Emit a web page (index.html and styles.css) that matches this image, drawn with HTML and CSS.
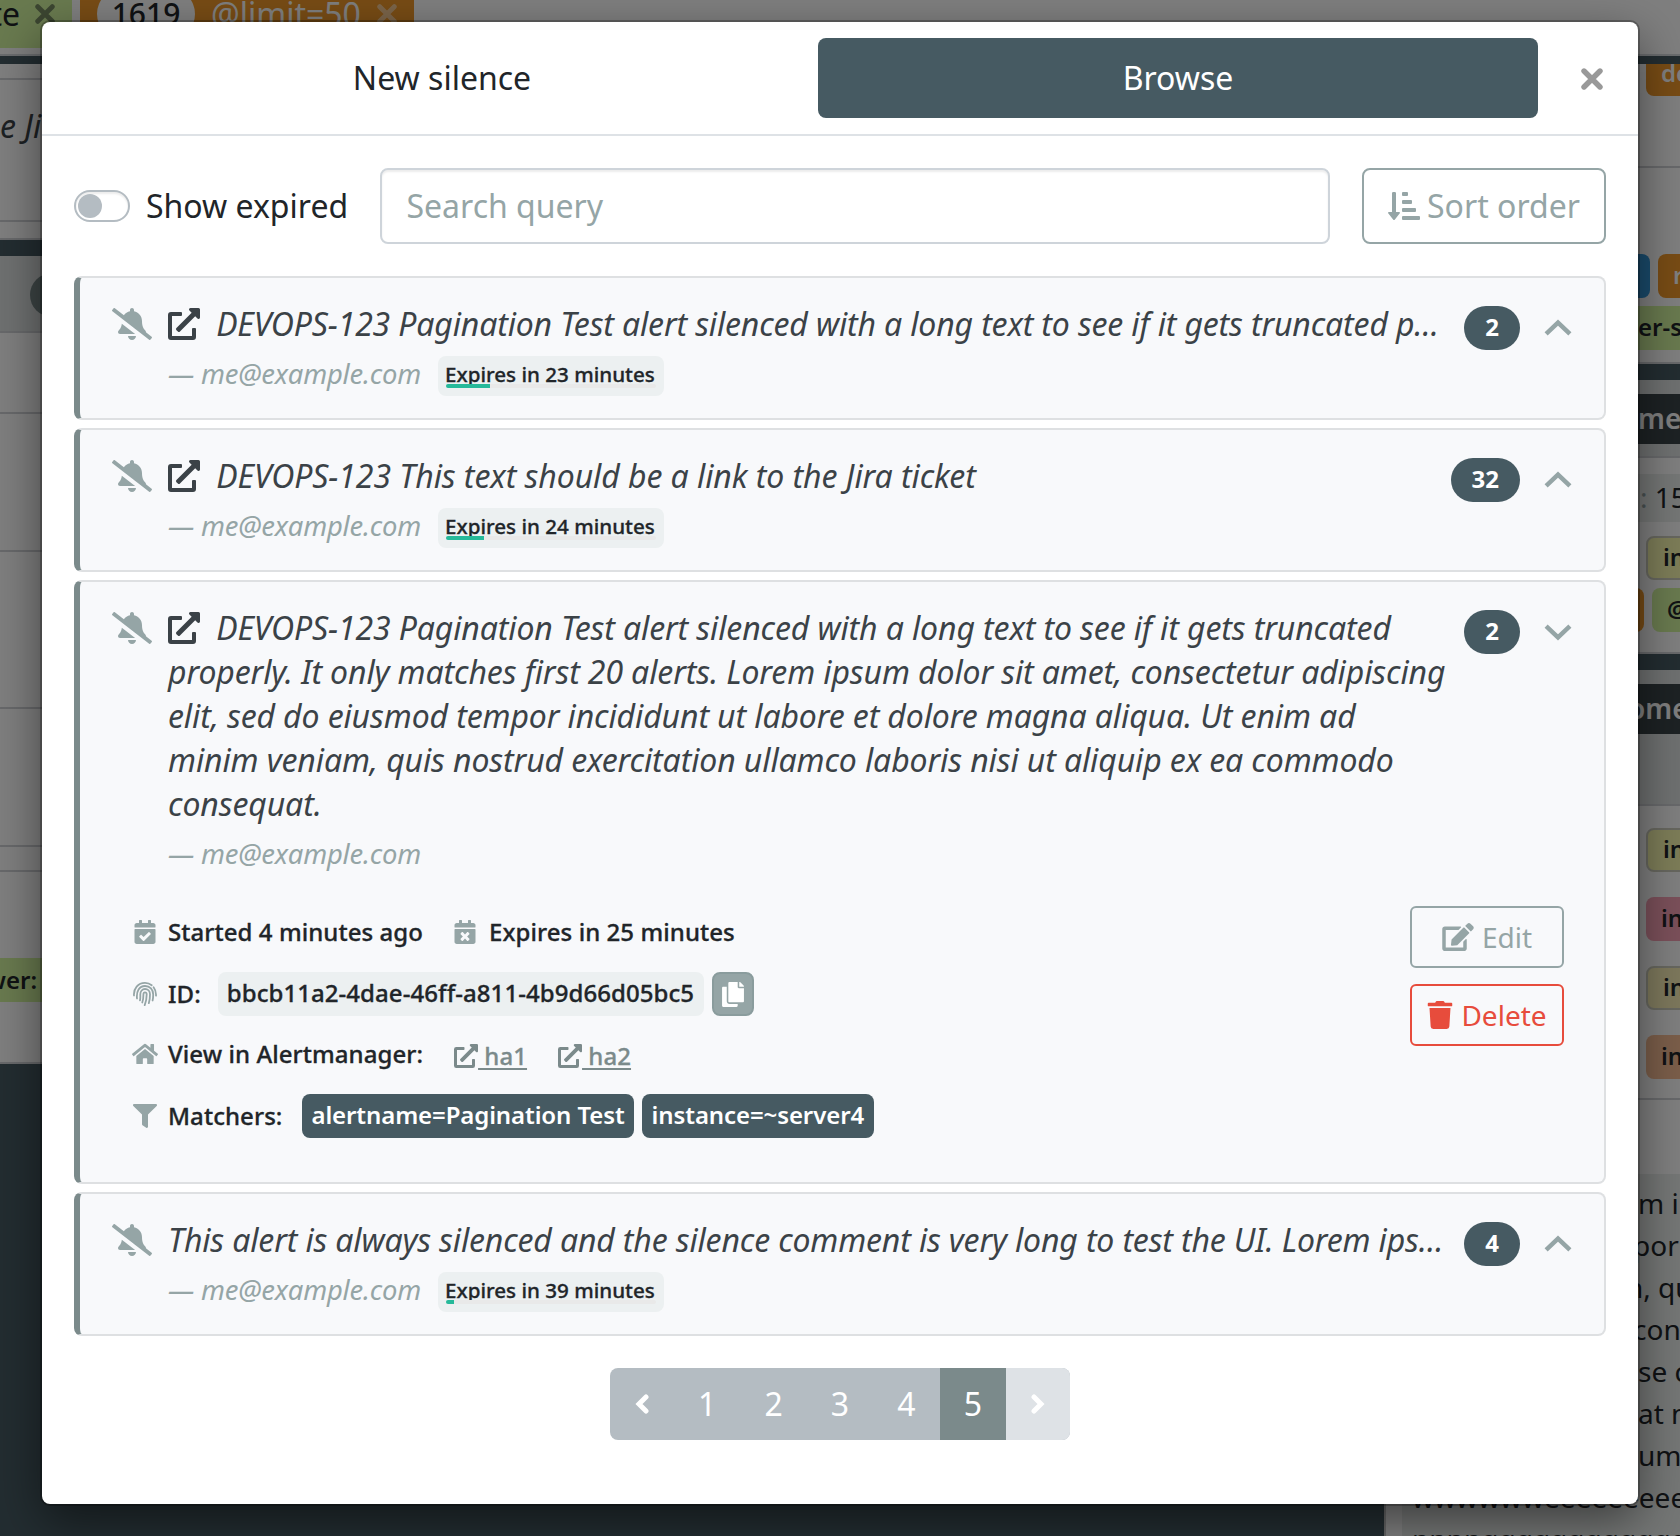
FILE: index.html
```html
<!DOCTYPE html>
<html lang="en">
<head>
<meta charset="utf-8">
<title>Silences</title>
<link rel="stylesheet" href="styles.css">
</head>
<body>
<svg class="sprite" aria-hidden="true">
  <symbol id="ext" viewBox="0 0 512 512"><path d="M432,320H400a16,16,0,0,0-16,16V448H64V128H208a16,16,0,0,0,16-16V80a16,16,0,0,0-16-16H48A48,48,0,0,0,0,112V464a48,48,0,0,0,48,48H400a48,48,0,0,0,48-48V336A16,16,0,0,0,432,320ZM488,0h-128c-21.37,0-32.05,25.91-17,41l35.73,35.73L135,320.37a24,24,0,0,0,0,34L157.67,377a24,24,0,0,0,34,0L435.28,133.32,471,169c15,15,41,4.5,41-17V24A24,24,0,0,0,488,0Z"/></symbol>
  <symbol id="bell" viewBox="0 0 640 512"><path d="M633.82 458.1l-90.62-70.05c.19-1.38.8-2.66.8-4.06.05-7.55-2.61-15.27-8.61-21.71-19.32-20.76-55.47-51.99-55.47-154.29 0-77.7-54.48-139.9-127.94-155.16V32c0-17.67-14.32-32-31.98-32s-31.98 14.33-31.98 32v20.84c-40.33 8.38-74.66 31.07-97.59 62.57L45.47 3.37C38.49-2.05 28.43-.8 23.01 6.18L3.37 31.45C-2.05 38.42-.8 48.47 6.18 53.9l588.35 454.73c6.98 5.43 17.03 4.17 22.46-2.81l19.64-25.27c5.42-6.97 4.17-17.02-2.81-22.45zM157.23 251.54c-8.61 67.96-36.41 93.33-52.62 110.75-6 6.45-8.66 14.16-8.61 21.71.11 16.4 12.98 32 32.1 32h241.92L157.23 251.54zM320 512c35.32 0 63.97-28.65 63.97-64H256.03c0 35.35 28.65 64 63.97 64z"/></symbol>
  <symbol id="chev" viewBox="0 0 28 17"><path d="M2.6 14.2 14 3.4 25.4 14.2" fill="none" stroke="currentColor" stroke-width="5" stroke-linecap="square" stroke-linejoin="miter" transform="translate(1.4 .6) scale(.9)"/></symbol>
  <symbol id="cross" viewBox="0 0 22 22"><path d="M3 3 19 19M19 3 3 19" fill="none" stroke="currentColor" stroke-width="5.4" stroke-linecap="round"/></symbol>
</svg>

<div class="page">
  <nav class="navbar">
    <span class="tag green nav-left">te <svg class="x"><use href="#cross"/></svg></span>
    <span class="tag orange nav-limit"><b class="pill">1619</b><span>@limit=50</span><svg class="x"><use href="#cross"/></svg></span>
  </nav>
  <div class="columns">
    <div class="col-left">
      <div class="gap gap-sm"></div>
      <div class="row h16"></div>
      <div class="row h142 comment">e Ji</div>
      <div class="row h18"></div>
      <div class="gap"></div>
      <div class="row h76 head"><i class="dot"></i></div>
      <div class="row h82"></div>
      <div class="row h138"></div>
      <div class="row h157"></div>
      <div class="row h138"></div>
      <div class="row h25"></div>
      <div class="row h192"><span class="tag green server">wer:</span></div>
    </div>
    <div class="col-right">
      <div class="gap gap-sm"></div>
      <div class="line h104"><span class="tag orange first">de</span></div>
      <div class="line h196 labels">
        <div class="tags"><span class="tag blue stub"></span><span class="tag orange">re</span></div>
        <div class="tags flush"><span class="tag green">er-s</span></div>
      </div>
      <div class="gap"></div>
      <div class="line head h78"><span class="name">me</span></div>
      <div class="line h196 list">
        <div class="time"><span>:</span> 15</div>
        <div class="tags one"><span class="tag yellow outlined">in</span></div>
        <div class="tags two"><span class="tag orange stub"></span><span class="tag green">@</span></div>
      </div>
      <div class="gap"></div>
      <div class="line head h136"><span class="name low">ome</span></div>
      <div class="line h294 stack">
        <span class="tag yellow outlined">in</span>
        <span class="tag pink">in</span>
        <span class="tag khaki outlined">in</span>
        <span class="tag peach">in</span>
      </div>
      <div class="prose-panel">
        <div class="prose">
          <p>m i</p><p class="tuck">por</p><p class="tuck more">n, qu</p><p class="tuck">con</p><p>se c</p><p>at n</p><p>um</p>
          <p class="wide">wwwwwweeeeeeeeeee</p>
          <p class="wide">nnnnqqqqqqqqqqqqqq</p>
        </div>
      </div>
    </div>
  </div>
</div>

<div class="backdrop">
  <div class="modal">
    <header class="modal-head">
      <a class="tab">New silence</a>
      <a class="tab active">Browse</a>
      <button class="close"><svg><use href="#cross"/></svg></button>
    </header>
    <div class="modal-body">
      <div class="toolbar">
        <span class="switch"><i></i></span>
        <label class="switch-label">Show expired</label>
        <div class="search">Search query</div>
        <button class="sort"><svg viewBox="0 0 32 28"><path d="M4 1.2Q4 0 5.200 0H6.800Q8 0 8 1.200V20H11Q12.600 20.200 11.600 21.500L6.900 27.400Q6 28.400 5.100 27.400L.4 21.500Q-.6 20.200 1 20H4Z"/><rect x="14" width="6" height="4" rx="1"/><rect x="14" y="8" width="10" height="4" rx="1"/><rect x="14" y="16" width="14" height="4" rx="1"/><rect x="14" y="24" width="18" height="4" rx="1"/></svg>Sort order</button>
      </div>

      <div class="cards">
        <article class="card">
          <div class="main">
            <svg class="bell"><use href="#bell"/></svg>
            <div class="body">
              <div class="title cut tight"><svg class="link"><use href="#ext"/></svg> DEVOPS-123 Pagination Test alert silenced with a long text to see if it gets truncated properly.</div>
              <div class="meta"><span class="author">— me@example.com</span><span class="expiry">Expires in 23 minutes<span class="bar"><i style="width:21%"></i></span></span></div>
            </div>
            <span class="count">2</span><svg class="chev"><use href="#chev"/></svg>
          </div>
        </article>
        <article class="card">
          <div class="main">
            <svg class="bell"><use href="#bell"/></svg>
            <div class="body">
              <div class="title cut"><svg class="link"><use href="#ext"/></svg> DEVOPS-123 This text should be a link to the Jira ticket</div>
              <div class="meta"><span class="author">— me@example.com</span><span class="expiry">Expires in 24 minutes<span class="bar"><i style="width:18%"></i></span></span></div>
            </div>
            <span class="count">32</span><svg class="chev"><use href="#chev"/></svg>
          </div>
        </article>
        <article class="card open">
          <div class="main">
            <svg class="bell"><use href="#bell"/></svg>
            <div class="body">
              <div class="title long"><svg class="link"><use href="#ext"/></svg> DEVOPS-123 Pagination Test alert silenced with a long text to see if it gets truncated properly. It only matches first 20 alerts. Lorem ipsum dolor sit amet, consectetur adipiscing elit, sed do eiusmod tempor incididunt ut labore et dolore magna aliqua. Ut enim ad minim veniam, quis nostrud exercitation ullamco laboris nisi ut aliquip ex ea commodo consequat.</div>
              <div class="meta"><span class="author">— me@example.com</span></div>
            </div>
            <span class="count">2</span><svg class="chev down"><use href="#chev"/></svg>
          </div>
          <div class="details">
            <div class="facts">
              <div class="fact">
                <svg class="ic" viewBox="0 0 448 512"><path d="M436 160H12c-6.627 0-12-5.373-12-12v-36c0-26.510 21.490-48 48-48h48V12c0-6.627 5.373-12 12-12h40c6.627 0 12 5.373 12 12v52h128V12c0-6.627 5.373-12 12-12h40c6.627 0 12 5.373 12 12v52h48c26.510 0 48 21.490 48 48v36c0 6.627-5.373 12-12 12zM12 192h424c6.627 0 12 5.373 12 12v260c0 26.510-21.490 48-48 48H48c-26.510 0-48-21.490-48-48V204c0-6.627 5.373-12 12-12zm333.296 95.947l-28.169-28.398c-4.667-4.705-12.265-4.736-16.970-.068L194.120 364.665l-45.980-46.352c-4.667-4.705-12.265-4.736-16.970-.068l-28.397 28.170c-4.705 4.667-4.736 12.265-.068 16.970l82.601 83.270c4.667 4.705 12.265 4.736 16.970.068l142.952-141.805c4.705-4.667 4.736-12.265.068-16.971z"/></svg>
                <span>Started 4 minutes ago</span>
                <svg class="ic second" viewBox="0 0 448 512"><path d="M436 160H12c-6.600 0-12-5.400-12-12v-36c0-26.500 21.500-48 48-48h48V12c0-6.600 5.400-12 12-12h40c6.600 0 12 5.400 12 12v52h128V12c0-6.600 5.400-12 12-12h40c6.600 0 12 5.400 12 12v52h48c26.500 0 48 21.500 48 48v36c0 6.600-5.400 12-12 12zM12 192h424c6.600 0 12 5.400 12 12v260c0 26.500-21.500 48-48 48H48c-26.500 0-48-21.500-48-48V204c0-6.600 5.400-12 12-12zm257.300 160l48.100-48.100c4.700-4.700 4.700-12.300 0-17l-28.300-28.300c-4.700-4.700-12.300-4.700-17 0L224 306.700l-48.100-48.100c-4.700-4.700-12.300-4.700-17 0l-28.300 28.300c-4.700 4.700-4.700 12.300 0 17l48.100 48.100-48.100 48.100c-4.700 4.700-4.700 12.300 0 17l28.300 28.300c4.700 4.700 12.300 4.700 17 0l48.100-48.100 48.100 48.100c4.700 4.700 12.300 4.700 17 0l28.300-28.300c4.700-4.700 4.700-12.300 0-17L269.300 352z"/></svg>
                <span>Expires in 25 minutes</span>
              </div>
              <div class="fact">
                <svg class="ic finger" viewBox="0 0 24 24"><g fill="none" stroke="currentColor" stroke-width="1.8" stroke-linecap="round"><path d="M1 13.500C.4 6.500 5 .9 12 .9c2.800 0 5 .9 6.700 2.300M20.600 5.200c1.700 2.200 2.600 4.800 2.400 8.500M4 16.500C3.200 9 6.300 4 12 4c5 0 8.200 3.700 8.200 8.500 0 2.200-.1 4-.6 6M7 18.300c.5-2 .3-4 .3-5.800C7.300 9.500 9.300 7 12 7s5 2.200 5 5.200c0 3.200-.3 6-1.200 9M9.300 20.500c.9-2.500 1.100-5.300 1.100-8 0-1.300.6-2.200 1.600-2.200s1.700.8 1.700 2c0 3.800-.6 7.300-2 10.900"/></g></svg>
                <span>ID:</span>
                <span class="id">bbcb11a2-4dae-46ff-a811-4b9d66d05bc5</span>
                <button class="copy"><svg viewBox="0 0 448 512"><path d="M320 448v40c0 13.255-10.745 24-24 24H24c-13.255 0-24-10.745-24-24V120c0-13.255 10.745-24 24-24h72v296c0 30.879 25.121 56 56 56h168zm0-344V0H152c-13.255 0-24 10.745-24 24v368c0 13.255 10.745 24 24 24h272c13.255 0 24-10.745 24-24V128H344c-13.200 0-24-10.800-24-24zm120.971-31.029L375.029 7.029A24 24 0 0 0 358.059 0H352v96h96v-6.059a24 24 0 0 0-7.029-16.970z"/></svg></button>
              </div>
              <div class="fact view">
                <svg class="ic home" viewBox="0 0 576 512"><path d="M280.370 148.260L96 300.110V464a16 16 0 0 0 16 16l112.060-.290a16 16 0 0 0 15.920-16V368a16 16 0 0 1 16-16h64a16 16 0 0 1 16 16v95.640a16 16 0 0 0 16 16.050L464 480a16 16 0 0 0 16-16V300L295.670 148.260a12.190 12.190 0 0 0-15.300 0zM571.600 251.470L488 182.560V44.050a12 12 0 0 0-12-12h-56a12 12 0 0 0-12 12v72.610L318.470 43a48 48 0 0 0-61 0L4.340 251.470a12 12 0 0 0-1.600 16.900l25.500 31A12 12 0 0 0 45.150 301l235.220-193.740a12.190 12.190 0 0 1 15.300 0L530.900 301a12 12 0 0 0 16.900-1.600l25.500-31a12 12 0 0 0-1.700-16.930z"/></svg>
                <span>View in Alertmanager:</span>
                <a class="am first"><svg><use href="#ext"/></svg><span>&nbsp;ha1</span></a>
                <a class="am"><svg><use href="#ext"/></svg><span>&nbsp;ha2</span></a>
              </div>
              <div class="fact">
                <svg class="ic" viewBox="0 0 512 512"><path d="M487.976 0H24.028C2.710 0-8.047 25.866 7.058 40.971L192 225.941V432c0 7.831 3.821 15.170 10.237 19.662l80 55.980C298.020 518.690 320 507.493 320 487.980V225.941l184.947-184.970C520.021 25.896 509.338 0 487.976 0z"/></svg>
                <span>Matchers:</span>
                <span class="matcher lead">alertname=Pagination Test</span>
                <span class="matcher">instance=~server4</span>
              </div>
            </div>
            <div class="actions">
              <button class="act"><svg viewBox="0 0 576 512" class="edit"><path d="M402.600 83.200l90.200 90.200c3.800 3.800 3.800 10 0 13.800L274.400 405.600l-92.800 10.300c-12.400 1.400-22.900-9.100-21.500-21.500l10.300-92.800L388.800 83.200c3.800-3.800 10-3.800 13.800 0zm162-22.900l-48.800-48.800c-15.200-15.200-39.900-15.200-55.200 0l-35.400 35.400c-3.800 3.800-3.800 10 0 13.800l90.200 90.200c3.800 3.800 10 3.800 13.800 0l35.400-35.400c15.200-15.300 15.200-40 0-55.200zM384 346.200V448H64V128h229.800c3.200 0 6.200-1.300 8.500-3.500l40-40c7.600-7.600 2.200-20.500-8.500-20.500H48C21.500 64 0 85.500 0 112v352c0 26.500 21.500 48 48 48h352c26.500 0 48-21.500 48-48V306.200c0-10.700-12.900-16-20.500-8.500l-40 40c-2.200 2.300-3.500 5.300-3.500 8.500z"/></svg>Edit</button>
              <button class="act danger"><svg viewBox="0 0 448 512" class="trash"><path d="M432 32H312l-9.400-18.700A24 24 0 0 0 281.100 0H166.800a23.720 23.720 0 0 0-21.400 13.300L136 32H16A16 16 0 0 0 0 48v32a16 16 0 0 0 16 16h416a16 16 0 0 0 16-16V48a16 16 0 0 0-16-16zM53.200 467a48 48 0 0 0 47.900 45h245.800a48 48 0 0 0 47.900-45L416 128H32z"/></svg>Delete</button>
            </div>
          </div>
        </article>
        <article class="card">
          <div class="main">
            <svg class="bell"><use href="#bell"/></svg>
            <div class="body">
              <div class="title cut tight">This alert is always silenced and the silence comment is very long to test the UI. Lorem ipsum dolor</div>
              <div class="meta"><span class="author">— me@example.com</span><span class="expiry">Expires in 39 minutes<span class="bar"><i style="width:4%"></i></span></span></div>
            </div>
            <span class="count">4</span><svg class="chev"><use href="#chev"/></svg>
          </div>
        </article>
      </div>

      <nav class="pages">
        <a class="arrow"><svg viewBox="0 0 14 20"><path d="M11 3 4 10l7 7" /></svg></a>
        <a>1</a><a>2</a><a>3</a><a>4</a><a class="current">5</a>
        <a class="arrow off"><svg viewBox="0 0 14 20"><path d="M3 3l7 7-7 7" /></svg></a>
      </nav>
    </div>
  </div>
</div>
</body>
</html>
```
FILE: styles.css
```css
* { box-sizing: border-box; }
body {
  margin: 0;
  height: 1536px;
  overflow: hidden;
  position: relative;
  font-family: "Noto Sans", sans-serif;
  font-size: 32px;
  line-height: 44px;
  color: #212529;
  background: #465a62;
}
button { font: inherit; margin: 0; padding: 0; background: none; cursor: pointer; }
svg { fill: currentColor; flex: none; }
p { margin: 0; }
.sprite { display: none; }

/* Alert list behind the dialog */
.page { height: 1536px; overflow: hidden; }
.navbar { height: 56px; background: #fff; border-bottom: 2px solid #d5d8dc; display: flex; gap: 8px; align-items: flex-start; overflow: hidden; }
.tag { display: flex; align-items: center; height: 44px; border-radius: 8px; padding: 0 8px; font-size: 24px; font-weight: 600; white-space: nowrap; }
.green { background: #d2f59f; }
.orange { background: #f0982a; color: #fff; }
.blue { background: #3498db; }
.yellow { background: #fafab0; }
.pink { background: #f7a0b4; }
.khaki { background: #faf0b8; }
.peach { background: #f7bd94; }
.outlined { border: 2px solid #cfcfbf; }
.x { width: 20px; height: 20px; opacity: .5; }
.navbar .tag { height: 68px; margin-top: -20px; border-radius: 0; font-size: 32px; font-weight: 400; }
.nav-left { width: 72px; justify-content: flex-end; gap: 15px; padding: 0 17px 0 0; }
.nav-limit { width: 334px; padding: 0 18px 0 17px; gap: 16px; }
.pill { flex: none; background: #fff; color: #212529; border-radius: 30px; width: 98px; height: 52px; line-height: 52px; font-size: 30px; font-weight: 500; text-align: center; }
.columns { display: grid; grid-template-columns: 1384px 296px; }
.gap { height: 16px; background: #465a62; }
.gap-sm { height: 8px; }
.row { display: flow-root; background: #fff; border-bottom: 2px solid #d0d3d6; width: 1384px; }
.row.head, .line.head { background: #dfe3e2; }
.comment { font-style: italic; padding-top: 24px; color: #3b4247; }
.dot { display: block; width: 44px; height: 44px; border-radius: 50%; background: #7b8a8b; margin: 17px 0 0 30px; }
.h16 { height: 16px; } .h142 { height: 142px; } .h18 { height: 18px; } .h76 { height: 77px; }
.h82 { height: 81px; } .h138 { height: 138px; } .h157 { height: 157px; } .h25 { height: 25px; } .h192 { height: 192px; }
.server { margin-top: 86px; width: 60px; padding: 0 23px 0 0; justify-content: flex-end; border-radius: 0; }
.col-right .gap { margin-left: 200px; }
.line { background: #fff; border-bottom: 2px solid #d0d3d6; padding-left: 254px; overflow: hidden; }
.h104 { height: 104px; } .h196 { height: 196px; } .h78 { height: 78px; } .h136 { height: 136px; } .h294 { height: 294px; }
.line .tag { width: 60px; padding: 0 0 2px 15px; }
.line .first { margin: -12px 0 0 8px; }
.labels { padding-top: 86px; }
.tags { display: flex; gap: 8px; }
.tags .tag { flex: none; }
.line .stub { width: 12px; padding: 0; border-radius: 0 8px 8px 0; }
.flush { margin-top: 8px; }
.line .flush .tag { padding-left: 0; border-radius: 0; }
.name { display: block; margin-top: 14px; height: 50px; line-height: 49px; background: #3b4449; color: #fff; font-weight: 600; font-size: 28px; white-space: nowrap; }
.name.low { text-indent: -10px; }
.list { padding: 16px 0 0; }
.list .time { height: 48px; line-height: 46px; padding-left: 256px; background: #eaeeed; font-size: 28px; white-space: nowrap; }
.time span { color: #95a5a6; }
.one { margin: 14px 0 0 262px; }
.two { margin: 8px 0 0 248px; }
.stack { padding: 22px 0 0 262px; }
.stack .tag { margin-bottom: 25px; }
.prose-panel { height: 436px; background: #fff; border-left: 2px solid #c8c8c8; padding: 74px 0 0 16px; }
.prose { height: 380px; background: #eaeeed; padding: 8px 0 0 236px; font-size: 28px; line-height: 42px; white-space: nowrap; }
.tuck { text-indent: -5px; }
.tuck.more { text-indent: -12px; }
.prose .wide { margin-left: -226px; }

/* Dialog */
.backdrop { position: absolute; inset: 0; background: rgba(0, 0, 0, .5); padding: 22px 42px 32px; }
.modal { height: 1482px; background: #fff; border-radius: 8px; box-shadow: 0 0 0 2px rgba(0, 0, 0, .25), 0 16px 48px rgba(0, 0, 0, .5); }
.modal-head { height: 114px; border-bottom: 2px solid #dee2e6; display: flex; align-items: flex-start; padding: 16px 0 0 24px; }
.tab { width: 752px; height: 80px; line-height: 80px; text-align: center; border-radius: 8px; }
.tab.active { width: 720px; background: #465a62; color: #fff; }
.close { border: 0; width: 22px; height: 22px; margin: 30px 0 0 43px; color: #999; }
.close svg { display: block; width: 22px; height: 22px; }
.modal-body { padding: 32px; }
.toolbar { display: flex; align-items: center; height: 76px; margin-bottom: 32px; }
.switch { width: 56px; height: 32px; border: 2px solid #b4bcc2; border-radius: 16px; padding: 2px; box-shadow: inset 0 2px 2px rgba(0, 0, 0, .075); }
.switch i { display: block; width: 24px; height: 24px; border-radius: 50%; background: #b4bcc2; }
.switch-label { margin-left: 16px; width: 234px; white-space: nowrap; }
.search { width: 950px; height: 76px; line-height: 72px; border: 2px solid #ced4da; border-radius: 8px; padding: 0 24.5px; color: #95a5a6; box-shadow: inset 0 2px 2px rgba(0, 0, 0, .075); }
.sort { margin-left: 32px; width: 244px; height: 76px; border: 2px solid #95a5a6; border-radius: 8px; color: #95a5a6; display: flex; align-items: center; padding-left: 24px; gap: 7px; white-space: nowrap; }
.sort svg { width: 32px; height: 28px; }

.cards { display: flex; flex-direction: column; gap: 8px; }
.card { border: 2px solid #dee0e2; border-left: 6px solid #7b8a8b; border-radius: 8px; background: #f8f9fb; padding: 24px 32px 22px; }
.card.open { padding-bottom: 44px; }
.main { display: flex; align-items: flex-start; }
.bell { width: 40px; height: 32px; margin: 6px 16px 0 0; color: #95a5a6; }
.body { flex: 1; min-width: 0; margin-right: 16px; }
.title { font-style: italic; color: #3b4247; letter-spacing: -.07px; }
.title.tight { letter-spacing: -.15px; }
.title.long { letter-spacing: -.115px; }
.title.cut { white-space: nowrap; overflow: hidden; text-overflow: ellipsis; }
.link { width: 32px; height: 32px; vertical-align: -4px; margin-right: 8px; }
.meta { display: flex; height: 40px; margin-top: 10px; }
.author { font-style: italic; font-size: 27.4px; letter-spacing: -.2px; line-height: 36px; color: #95a5a6; width: 270px; white-space: nowrap; }
.expiry { width: 226px; height: 40px; border-radius: 8px; background: #ecf0f1; padding: 5px 7px 0; font-size: 20.6px; line-height: 27px; font-weight: 500; -webkit-text-stroke: .3px currentColor; white-space: nowrap; position: relative; }
.bar { position: absolute; left: 8px; top: 28px; width: 210px; height: 4px; border-radius: 2px; background: #e9e9e9; overflow: hidden; }
.bar i { display: block; height: 4px; background: #26b99a; }
.count { min-width: 56px; height: 44px; padding: 0 21px; line-height: 42px; margin-top: 4px; border-radius: 22px; background: #465a62; color: #fff; font-size: 24px; font-weight: 700; text-align: center; }
.chev { width: 28px; height: 17px; margin: 17px 0 0 24px; color: #95a5a6; }
.chev.down { transform: rotate(180deg); margin-top: 18px; }

.details { display: flex; justify-content: space-between; margin-top: 30px; padding: 0 8px 0 20px; }
.facts { padding-top: 4px; font-size: 24px; font-weight: 500; letter-spacing: .06px; -webkit-text-stroke: .3px currentColor; }
.fact { display: flex; align-items: center; height: 44px; margin-bottom: 18px; white-space: nowrap; }
.fact:last-child { margin-bottom: 0; }
.fact.view { margin: -2px 0 16px; padding-bottom: 2px; height: 46px; }
.ic { width: 26px; height: 24px; margin-right: 10px; color: #95a5a6; stroke-width: 0; }
.ic.second { margin-left: 29px; margin-right: 11px; }
.id { margin-left: 17px; width: 486px; height: 44px; line-height: 42px; padding-left: 9px; border-radius: 8px; background: #ecf0f1; }
.copy { margin-left: 8px; width: 42px; height: 44px; border: 2px solid #8a9c9d; border-radius: 8px; background: #95a5a6; color: #fff; display: flex; align-items: center; justify-content: center; }
.copy svg { width: 22px; height: 25px; }
.am { color: #7b8a8b; display: flex; align-items: center; margin-left: 31px; padding-top: 4px; }
.am svg { width: 24px; height: 24px; }
.am span { text-decoration: underline; text-decoration-thickness: 2px; text-underline-offset: 3px; }
.matcher { height: 44px; line-height: 42px; padding: 0 10px; margin-left: 8px; border-radius: 8px; background: #465a62; color: #fff; font-weight: 600; letter-spacing: -.1px; -webkit-text-stroke: 0; }
.matcher.lead { margin-left: 20px; padding: 0 9px; }
.actions { display: flex; flex-direction: column; gap: 16px; }
.act { width: 154px; height: 62px; border: 2px solid #95a5a6; border-radius: 6px; color: #95a5a6; font-size: 28px; display: flex; align-items: center; justify-content: center; gap: 8px; }
.act.danger { color: #e74c3c; border-color: #e74c3c; }
.edit { width: 32px; height: 28px; }
.trash { width: 26px; height: 28px; }

.pages { display: flex; width: 460px; height: 72px; margin: 32px auto 0; border-radius: 8px; overflow: hidden; background: #b4bcc2; color: #fff; }
.pages a { flex: 1; line-height: 72px; text-align: center; }
.pages .arrow { flex: 0 0 64px; display: flex; align-items: center; justify-content: center; }
.arrow svg { width: 14px; height: 20px; }
.arrow path { fill: none; stroke: #fff; stroke-width: 5; stroke-linecap: round; }
.pages .current { background: #7b8a8b; }
.pages .off { background: #dee2e6; }
```
